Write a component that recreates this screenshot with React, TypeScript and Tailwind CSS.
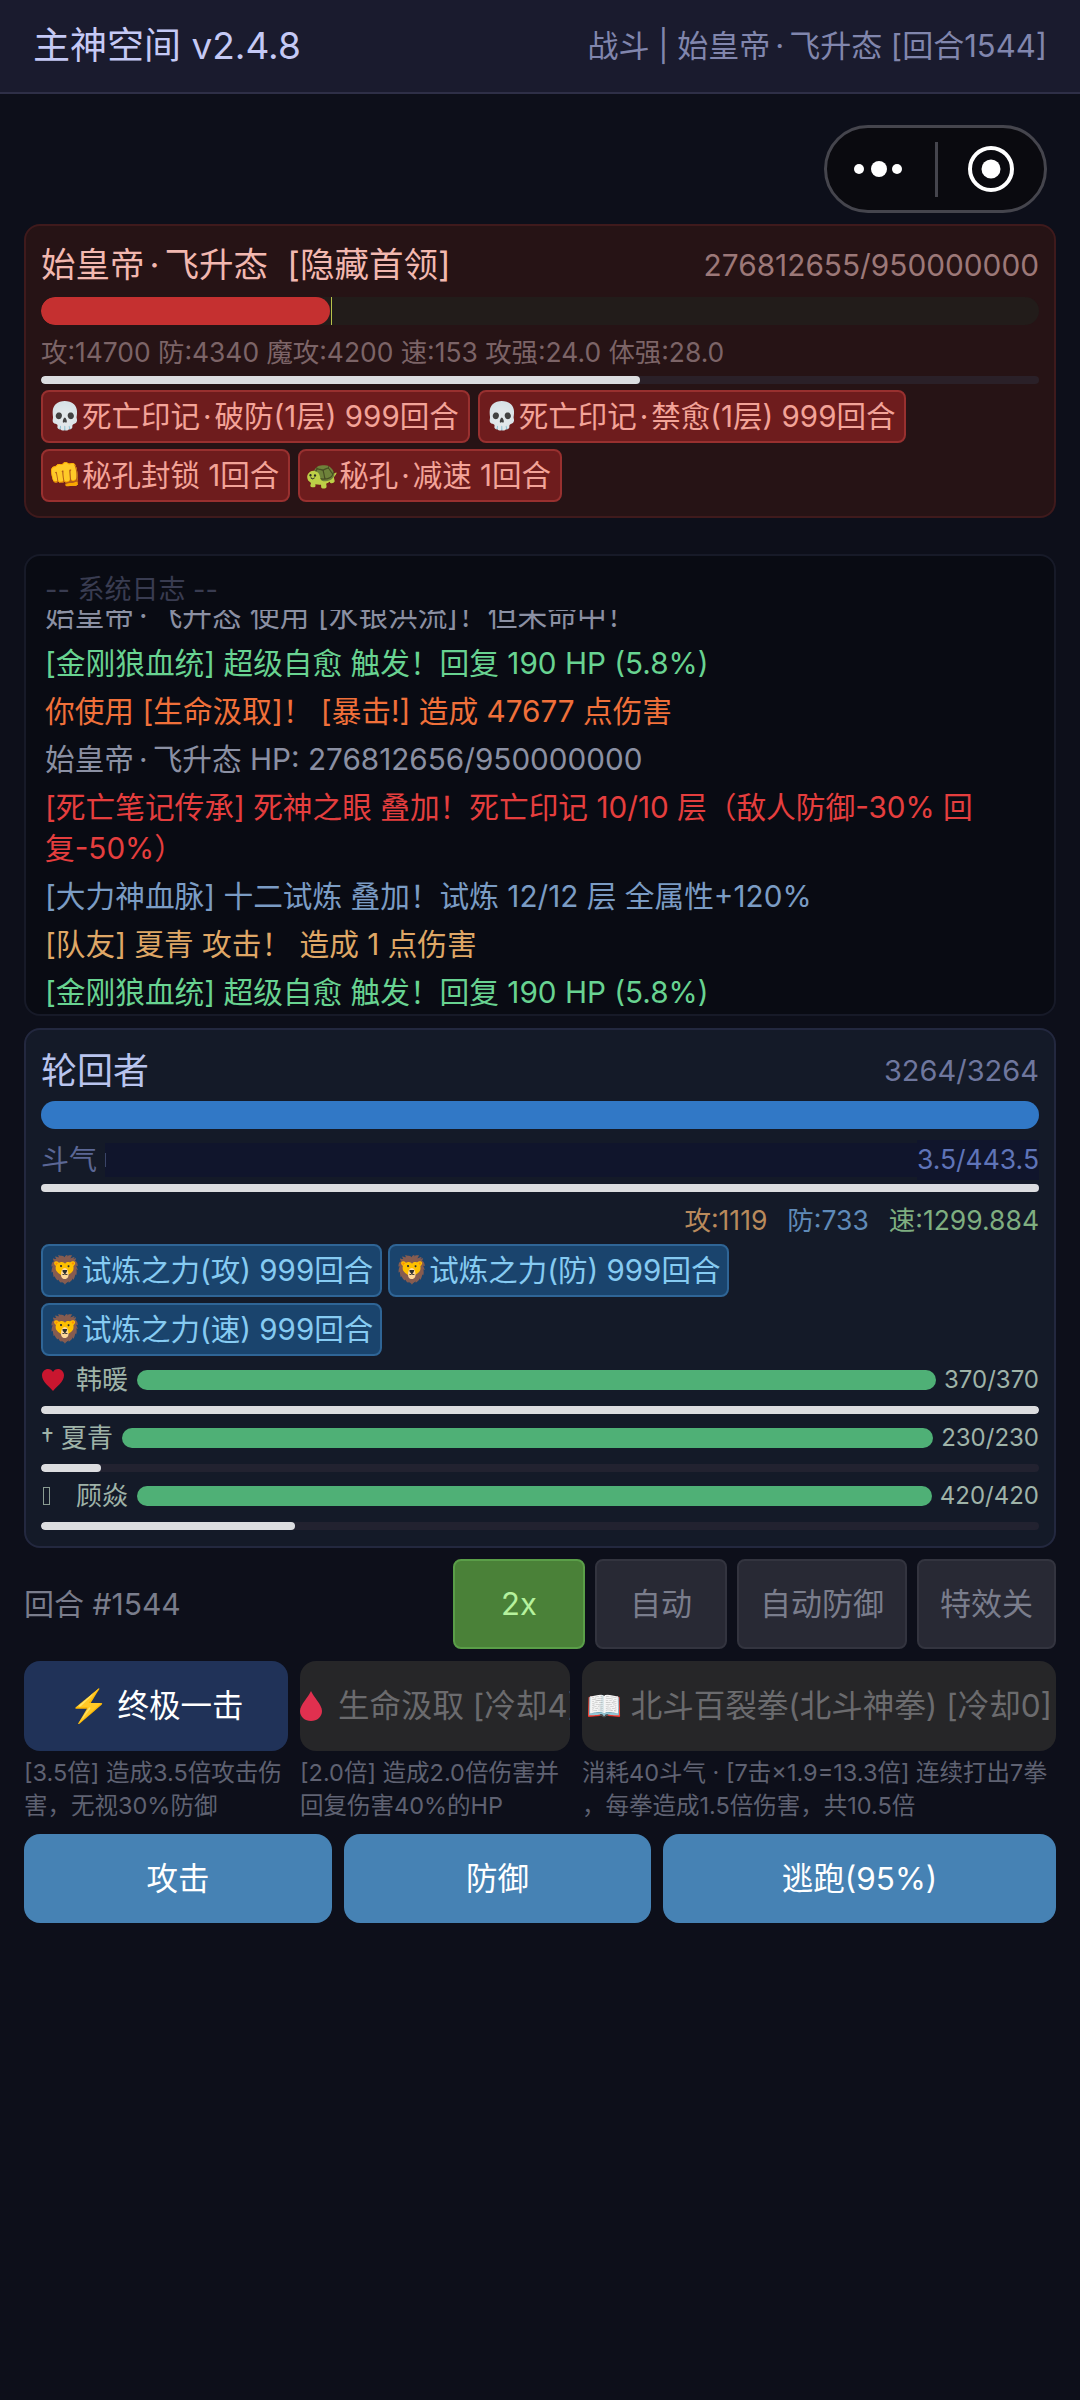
import { Fragment } from 'react';

const font = { fontFamily: 'Inter, "Noto Sans CJK SC", sans-serif' };

const bossBuffs = [
  [{ icon: '💀', text: '死亡印记·破防(1层) 999回合' }, { icon: '💀', text: '死亡印记·禁愈(1层) 999回合' }],
  [{ icon: '👊', text: '秘孔封锁 1回合' }, { icon: '🐢', text: '秘孔·减速 1回合' }],
];

const playerBuffs = [
  ['试炼之力(攻) 999回合', '试炼之力(防) 999回合'],
  ['试炼之力(速) 999回合'],
];

const logs = [
  { text: '始皇帝·飞升态 使用 [水银洪流]！但未命中！', color: 'text-[#8b90a3]' },
  { text: '[金刚狼血统] 超级自愈 触发！回复 190 HP (5.8%)', color: 'text-[#68d391]' },
  { text: '你使用 [生命汲取]！ [暴击!] 造成 47677 点伤害', color: 'text-[#f0703a]' },
  { text: '始皇帝·飞升态 HP: 276812656/950000000', color: 'text-[#8b90a3]' },
  { text: '[死亡笔记传承] 死神之眼 叠加！死亡印记 10/10 层（敌人防御-30% 回复-50%）', color: 'text-[#e53e3e]' },
  { text: '[大力神血脉] 十二试炼 叠加！试炼 12/12 层 全属性+120%', color: 'text-[#7b9cc4]' },
  { text: '[队友] 夏青 攻击！ 造成 1 点伤害', color: 'text-[#dfa766]' },
  { text: '[金刚狼血统] 超级自愈 触发！回复 190 HP (5.8%)', color: 'text-[#68d391]' },
];

// the middle dot sits wider in the reference than in the latin font
function Dotted({ text, gap = 'mx-[5px]' }: { text: string; gap?: string }) {
  return (
    <>
      {text.split('·').map((part, i) => (
        <Fragment key={i}>
          {i > 0 && <span className={gap}>·</span>}
          {part}
        </Fragment>
      ))}
    </>
  );
}

function Capsule() {
  return (
    <div className="absolute left-[824px] top-[125px] w-[223px] h-[88px] rounded-full border-[3px] border-[#45454d] bg-[#0a0a0f] flex items-center">
      <svg width="108" height="82" viewBox="0 0 108 82">
        <circle cx="32" cy="41" r="5" fill="#fff" />
        <circle cx="52" cy="41" r="8" fill="#fff" />
        <circle cx="70" cy="41" r="5" fill="#fff" />
      </svg>
      <div className="w-[3px] h-[55px] bg-[#45454d]" />
      <svg width="106" height="82" viewBox="0 0 106 82">
        <circle cx="53" cy="41" r="21" fill="none" stroke="#fff" strokeWidth="4" />
        <circle cx="53" cy="41" r="9.5" fill="#fff" />
      </svg>
    </div>
  );
}

function Ally({ icon, iconWidth, name, hp, fill }: { icon: React.ReactNode; iconWidth: string; name: string; hp: string; fill: string }) {
  return (
    <div>
      <div className="flex items-center h-[32px]">
        <span className={`${iconWidth} flex items-center shrink-0 text-[26px] text-[#9fb3a8]`}>{icon}</span>
        <span className="shrink-0 whitespace-nowrap text-[26px] leading-none text-[#9fb3a8]">{name}</span>
        <div className="flex-1 h-[20px] rounded-full bg-[#4fb076] ml-[9px] mr-[8px]" />
        <span className="text-[24px] text-[#9fb3a8] leading-none">{hp}</span>
      </div>
      <div className="mt-[10px] h-[8px] rounded-full bg-[#222230] overflow-hidden">
        <div className={`h-full rounded-full bg-[#dcdde0] ${fill}`} />
      </div>
    </div>
  );
}

export default function App() {
  return (
    <div style={font} className="relative min-h-[2400px] bg-[#0d0f1a]">
      {/* Header */}
      <div className="h-[94px] bg-[#1a1b2e] border-b-[2px] border-[#2e2f47] px-[33px] flex items-center justify-between">
        <span className="text-[37px] text-[#c5c9f5]">主神空间 v2.4.8</span>
        <span className="text-[31px] text-[#8186ad]"><Dotted text="战斗 | 始皇帝·飞升态 [回合1544]" /></span>
      </div>

      <Capsule />

      <div className="px-[24px] pt-[130px]">
        {/* Boss */}
        <div className="h-[294px] rounded-[16px] border-[2px] border-[#3f1a1c] bg-[#261315] px-[15px] pt-[18px]">
          <div className="flex items-center justify-between h-[42px]">
            <span className="text-[34.5px] text-[#f2b8b0] whitespace-pre"><Dotted text="始皇帝·飞升态  [隐藏首领]" /></span>
            <span className="text-[29.8px] text-[#9c7878]">276812655/950000000</span>
          </div>
          <div className="mt-[11px] h-[28px] rounded-full bg-[#221c1a] overflow-hidden flex">
            <div className="h-full w-[289px] rounded-full bg-[#c53030]" />
            <div className="h-full w-[1px] ml-[1px] bg-[#b8c24a]" />
          </div>
          <div className="mt-[9px] text-[26.4px] leading-[36px] text-[#7c6467]">攻:14700 防:4340 魔攻:4200 速:153 攻强:24.0 体强:28.0</div>
          <div className="mt-[6px] h-[8px] rounded-full bg-[#2a2028] overflow-hidden">
            <div className="h-full w-[60%] rounded-full bg-[#dcdde0]" />
          </div>
          <div className="mt-[6px] flex flex-col gap-[6px]">
            {bossBuffs.map((row, i) => (
              <div key={i} className="flex gap-[8px]">
                {row.map((b) => (
                  <span key={b.text} className="h-[53px] flex items-center pl-[5px] pr-[9px] rounded-[8px] border-[2px] border-[#98302f] bg-[#6e1c1d] text-[29.5px] text-[#f3a398] whitespace-nowrap">
                    <span className="text-[27px]">{b.icon}</span><span><Dotted text={b.text} gap="mx-[3px]" /></span>
                  </span>
                ))}
              </div>
            ))}
          </div>
        </div>

        {/* Log */}
        <div className="mt-[36px] h-[462px] rounded-[16px] border-[2px] border-[#171a28] bg-[#090b13] px-[19px] flex flex-col overflow-hidden">
          <div className="h-[54px] shrink-0 pt-[16px] text-[27px] leading-[36px] text-[#393c51]">-- 系统日志 --</div>
          <div className="flex-1 min-h-0 mb-[1px] flex flex-col justify-end overflow-hidden gap-[7px]">
            {logs.map((l, i) => (
              <div key={i} className={`shrink-0 text-[29.7px] leading-[41px] ${l.color}`}><Dotted text={l.text} /></div>
            ))}
          </div>
        </div>

        {/* Player */}
        <div className="mt-[12px] h-[520px] rounded-[16px] border-[2px] border-[#23283f] bg-[#141a28] px-[15px] pt-[18px]">
          <div className="flex items-center justify-between h-[46px]">
            <span className="text-[36px] text-[#b9c4ee]">轮回者</span>
            <span className="text-[29px] text-[#6f779e]">3264/3264</span>
          </div>
          <div className="mt-[7px] h-[28px] rounded-full bg-[#3178c6]" />
          <div className="mt-[14px] flex items-center h-[34px] text-[28px]">
            <span className="text-[#5b6795]">斗气</span>
            <div className="flex-1 h-full ml-[8px] bg-[#10152c] flex items-center">
              <div className="w-[1px] h-[14px] bg-[#3a4468]" />
            </div>
            <span className="bg-[#10152c] text-[26.5px] text-[#5f74b8]">3.5/443.5</span>
          </div>
          <div className="mt-[7px] h-[8px] rounded-full bg-[#dcdde0]" />
          <div className="mt-[11px] flex justify-end gap-[20px] h-[36px] items-center text-[26.5px]">
            <span className="text-[#b98a5c]">攻:1119</span>
            <span className="text-[#5f8ab8]">防:733</span>
            <span className="text-[#7fae80]">速:1299.884</span>
          </div>
          <div className="mt-[5px] flex flex-col gap-[6px]">
            {playerBuffs.map((row, i) => (
              <div key={i} className="flex gap-[6px]">
                {row.map((t) => (
                  <span key={t} className="h-[53px] flex items-center pl-[5px] pr-[7px] rounded-[8px] border-[2px] border-[#2f6596] bg-[#1a446d] text-[29.5px] text-[#86cbf2] whitespace-nowrap">
                    <span className="text-[27px]">🦁</span>{t}
                  </span>
                ))}
              </div>
            ))}
          </div>
          <div className="mt-[8px] flex flex-col gap-[8px]">
            <Ally
              icon={
                <svg width="24" height="24" viewBox="0 0 24 24">
                  <path d="M12 23 C9 19 1 14 1 7.5 C1 3.5 4 1 7 1 C9.300 1 11 2.300 12 4 C13 2.300 14.700 1 17 1 C20 1 23 3.500 23 7.500 C23 14 15 19 12 23Z" fill="#c9162f" />
                </svg>
              }
              iconWidth="w-[35px]"
              name="韩暖"
              hp="370/370"
              fill="w-full"
            />
            <Ally icon={<span className="leading-none">†</span>} iconWidth="w-[20px]" name="夏青" hp="230/230" fill="w-[6%]" />
            <Ally icon={<span className="ml-[2px] w-[7px] h-[18px] border border-[#8a9c92]" />} iconWidth="w-[35px]" name="顾焱" hp="420/420" fill="w-[25.5%]" />
          </div>
        </div>

        {/* Controls */}
        <div className="mt-[11px] flex items-center h-[90px] gap-[10px]">
          <span className="flex-1 text-[30px] text-[#7a7d8c]">回合 #1544</span>
          <button className="w-[132px] h-full rounded-[8px] border-[2px] border-[#5a9e48] bg-[#4a8138] text-[31px] text-[#b5f29d]">2x</button>
          <button className="w-[132px] h-full rounded-[8px] border-[2px] border-[#33343f] bg-[#282934] text-[31px] text-[#7a7d8c]">自动</button>
          <button className="w-[170px] h-full rounded-[8px] border-[2px] border-[#33343f] bg-[#282934] text-[31px] text-[#7a7d8c]">自动防御</button>
          <button className="w-[139px] h-full rounded-[8px] border-[2px] border-[#33343f] bg-[#282934] text-[31px] text-[#7a7d8c]">特效关</button>
        </div>

        {/* Skills */}
        <div className="mt-[12px] flex gap-[12px]">
          <div className="w-[264px] shrink-0">
            <div className="h-[90px] rounded-[16px] bg-[#203258] flex items-center justify-center text-[31.5px] text-white whitespace-pre overflow-hidden"><span className="text-[32px]">⚡</span> 终极一击</div>
            <p className="mt-[5px] text-[23.5px] leading-[33px] text-[#5f6272]">[3.5倍] 造成3.5倍攻击伤害，无视30%防御</p>
          </div>
          <div className="w-[270px] shrink-0">
            <div className="h-[90px] rounded-[16px] bg-[#262628] flex items-center text-[31.5px] text-[#6b6b6e] whitespace-pre overflow-hidden">
              <svg width="22" height="30" viewBox="0 0 22 30" className="shrink-0 mr-[16px]">
                <path d="M11 0 C9 5 0 14 0 20 C0 26 5 30 11 30 C17 30 22 26 22 20 C22 14 13 5 11 0Z" fill="#e0304f" />
              </svg>
              生命汲取 [冷却4]
            </div>
            <p className="mt-[5px] text-[23.5px] leading-[33px] text-[#5f6272]">[2.0倍] 造成2.0倍伤害并回复伤害40%的HP</p>
          </div>
          <div className="flex-1 min-w-0">
            <div className="h-[90px] rounded-[16px] bg-[#262628] flex items-center justify-center text-[31.5px] text-[#6b6b6e] whitespace-pre overflow-hidden"><span className="text-[29px]">📖</span> 北斗百裂拳(北斗神拳) [冷却0]</div>
            <p className="mt-[5px] text-[23.5px] leading-[33px] text-[#5f6272] whitespace-nowrap">消耗40斗气 · [7击×1.9=13.3倍] 连续打出7拳<br />，每拳造成1.5倍伤害，共10.5倍</p>
          </div>
        </div>

        {/* Actions */}
        <div className="mt-[12px] flex gap-[12px]">
          <button className="w-[308px] h-[89px] rounded-[16px] bg-[#4682b4] text-[31.5px] text-white">攻击</button>
          <button className="w-[307px] h-[89px] rounded-[16px] bg-[#4682b4] text-[31.5px] text-white">防御</button>
          <button className="flex-1 h-[89px] rounded-[16px] bg-[#4682b4] text-[31.5px] text-white">逃跑(95%)</button>
        </div>
      </div>
    </div>
  );
}
